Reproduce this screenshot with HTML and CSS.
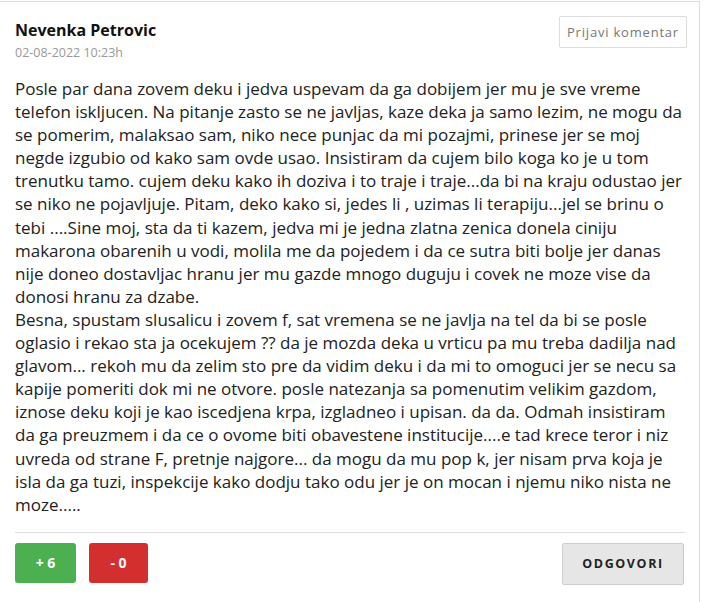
FILE: index.html
```html
<!DOCTYPE html>
<html>
<head>
<meta charset="utf-8">
<link rel="stylesheet" href="styles.css">
</head>
<body>
<div class="comment">
  <div class="head">
    <div class="who">
      <div class="name">Nevenka Petrovic</div>
      <div class="date">02-08-2022 10:23h</div>
    </div>
    <button class="report">Prijavi komentar</button>
  </div>
  <div class="text">Posle par dana zovem deku i jedva uspevam da ga dobijem jer mu je sve vreme telefon iskljucen. Na pitanje zasto se ne javljas, kaze deka ja samo lezim, ne mogu da se pomerim, malaksao sam, niko nece punjac da mi pozajmi, prinese jer se moj negde izgubio od kako sam ovde usao. Insistiram da cujem bilo koga ko je u tom trenutku tamo. cujem deku kako ih doziva i to traje i traje...da bi na kraju odustao jer se niko ne pojavljuje. Pitam, deko kako si, jedes li , uzimas li terapiju...jel se brinu o tebi ....Sine moj, sta da ti kazem, jedva mi je jedna zlatna zenica donela ciniju makarona obarenih u vodi, molila me da pojedem i da ce sutra biti bolje jer danas nije doneo dostavljac hranu jer mu gazde mnogo duguju i covek ne moze vise da donosi hranu za dzabe.<br>Besna, spustam slusalicu i zovem f, sat vremena se ne javlja na tel da bi se posle oglasio i rekao sta ja ocekujem ?? da je mozda deka u vrticu pa mu treba dadilja nad glavom... rekoh mu da zelim sto pre da vidim deku i da mi to omoguci jer se necu sa kapije pomeriti dok mi ne otvore. posle natezanja sa pomenutim velikim gazdom, iznose deku koji je kao iscedjena krpa, izgladneo i upisan. da da. Odmah insistiram da ga preuzmem i da ce o ovome biti obavestene institucije....e tad krece teror i niz uvreda od strane F, pretnje najgore... da mogu da mu pop k, jer nisam prva koja je isla da ga tuzi, inspekcije kako dodju tako odu jer je on mocan i njemu niko nista ne moze.....</div>
  <div class="foot">
    <div class="votes">
      <button class="vote up">+ 6</button>
      <button class="vote down">- 0</button>
    </div>
    <button class="reply">ODGOVORI</button>
  </div>
</div>
</body>
</html>
```
FILE: styles.css
```css
html, body { margin: 0; padding: 0; background: #fff; }
body { font-family: "Open Sans", sans-serif; color: #222; }
.comment {
  box-sizing: border-box;
  width: 700px;
  height: 601px;
  margin-top: 1px;
  border-top: 1px solid #ddd;
  border-right: 1px solid #ddd;
  padding: 0 14px 0 15px;
}
.head { display: flex; justify-content: space-between; align-items: flex-start; padding-top: 14px; }
.name { font-weight: 700; font-size: 16px; color: #111; line-height: 22px; padding-top: 3px; }
.date { font-size: 12.5px; color: #999; line-height: 18px; margin-top: 3px; }
.report {
  font-family: "Open Sans", sans-serif; font-size: 13px; color: #777; letter-spacing: 0.8px;
  background: #fff; border: 1px solid #ddd; border-radius: 2px;
  height: 32px; padding: 0 7px; margin-right: -2px; cursor: pointer;
}
.text { font-size: 17px; line-height: 23.1px; margin-top: 15px; color: #222; padding-bottom: 16px; border-bottom: 1px solid #ddd; }
.foot { display: flex; justify-content: space-between; align-items: flex-start; padding-top: 10px; }
.votes { display: flex; gap: 13px; }
.vote { font-family: "Open Sans", sans-serif; font-weight: 700; font-size: 14px; color: #fff; border: none; border-radius: 3px; height: 40px; width: 61px; }
.vote.down { width: 59px; }
.up { background: #4caf50; }
.down { background: #d32f2f; }
.reply {
  font-family: "Open Sans", sans-serif; font-weight: 700; font-size: 12.5px; letter-spacing: 1.6px; color: #222;
  background: #e6e6e6; border: 1px solid #ccc; border-radius: 2px; height: 42px; width: 122px; margin-right: 1px;
}
```
